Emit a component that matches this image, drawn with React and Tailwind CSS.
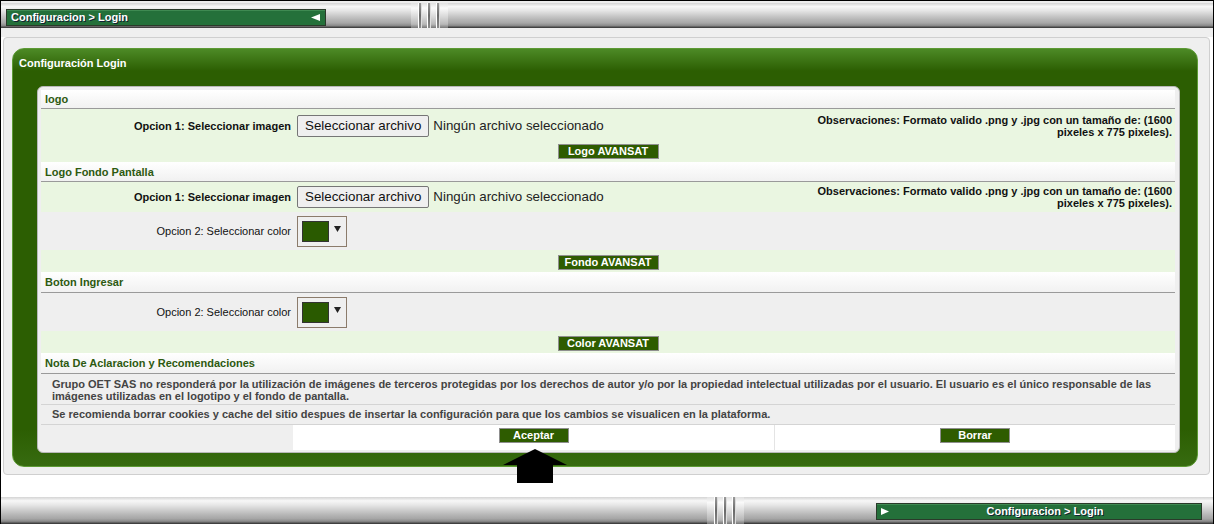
import React from "react";

const metal =
  "bg-[linear-gradient(to_bottom,#d4d4d4_0%,#f7f7f7_14%,#e6e6e6_30%,#cbcbcb_50%,#b6b6b6_66%,#a6a6a6_80%,#8a8a8a_90%,#4a4a4a_97%,#2e2e2e_100%)]";

function Grooves() {
  return (
    <div className="flex h-full w-[37px] bg-[linear-gradient(to_bottom,#e0e0e0_0%,#fafafa_20%,#d8d8d8_55%,#b8b8b8_85%,#777_100%)]">
      <div className="w-[7px]" />
      {[0, 1, 2].map((i) => (
        <div key={i} className="flex h-full w-[9px]">
          <div className="w-[1px] h-full bg-[#ffffff]" />
          <div className="w-[2px] h-full bg-[linear-gradient(to_bottom,#9a9a9a,#6a6a6a_50%,#8a8a8a)]" />
          <div className="w-[1px] h-full bg-[#dcdcdc]" />
          <div className="w-[5px] h-full" />
        </div>
      ))}
    </div>
  );
}

function Tab({ children }) {
  return (
    <div className="flex h-[17px] items-center border border-[#2a3a2a] bg-[#24703a] shadow-[inset_0_1px_0_#3f8a52] text-[11px] font-bold text-white [text-shadow:1px_1px_0_#123]">
      {children}
    </div>
  );
}

function GreenButton({ children, w }) {
  return (
    <div
      className={`flex h-[15px] items-center justify-center border border-[#8f8f8f] bg-[#2e5c00] text-[11px] font-bold leading-none text-white ${w}`}
    >
      {children}
    </div>
  );
}

function Header({ children, h }) {
  return (
    <div
      className={`flex items-center border-b border-[#9a9a9a] bg-[linear-gradient(to_bottom,#ffffff,#f1f1f1)] pl-[4px] pt-[1px] text-[11px] font-bold text-[#2d5a10] ${h}`}
    >
      {children}
    </div>
  );
}

function FileRow({ h }) {
  return (
    <div className={`grid grid-cols-[252px_482px_400px] bg-[#eaf6e1] ${h}`}>
      <div className="flex items-center justify-end pr-[2px] text-[11px] font-bold text-[#111]">
        Opcion 1: Seleccionar imagen
      </div>
      <div className="flex items-center pl-[4px]">
        <div className="flex h-[22px] items-center rounded-[2px] border border-[#767676] bg-[#efefef] px-[7px] text-[13.33px] text-[#111]">
          Seleccionar archivo
        </div>
        <span className="ml-[4px] text-[13.33px] text-[#222]">Ningún archivo seleccionado</span>
      </div>
      <div className="flex items-center justify-end pr-[3px] text-right text-[11px] font-bold leading-[12px] text-[#111]">
        <div>
          Observaciones: Formato valido .png y .jpg con un tamaño de: (1600
          <br />
          pixeles x 775 pixeles).
        </div>
      </div>
    </div>
  );
}

function ColorRow({ h }) {
  return (
    <div className={`grid grid-cols-[252px_882px] bg-[#efefef] ${h}`}>
      <div className="flex items-center justify-end pr-[2px] text-[11px] text-[#111]">
        Opcion 2: Seleccionar color
      </div>
      <div className="flex items-center pl-[4px]">
        <div className="flex h-[31px] w-[50px] items-center border border-[#8b7b6b] bg-[#efefef] pl-[4px]">
          <div className="h-[21px] w-[27px] border border-[#333] bg-[#2a5a00]" />
          <svg width="7" height="6" viewBox="0 0 7 6" className="ml-[5px] mb-[5px]">
            <polygon points="0,0 7,0 3.5,6" fill="#222" />
          </svg>
        </div>
      </div>
    </div>
  );
}

function ButtonRow({ h, label, w, pt }) {
  return (
    <div className={`flex justify-center bg-[#eaf6e1] ${h} ${pt}`}>
      <GreenButton w={w}>{label}</GreenButton>
    </div>
  );
}

export default function App() {
  return (
    <div className="relative flex h-[524px] w-[1214px] flex-col overflow-hidden border-l border-r border-t border-black bg-white font-['Liberation_Sans',Arial,sans-serif]">
      {/* top bar */}
      <div className="h-[29px] bg-[#ededed] pt-[2px]">
        <div className={`flex h-[25px] ${metal}`}>
          <div className="ml-[5px] mt-[6px] w-[320px]">
            <Tab>
              <span className="pl-[4px]">Configuracion &gt; Login</span>
              <svg width="9" height="7" viewBox="0 0 9 7" className="ml-auto mr-[5px]">
                <polygon points="0,3.5 9,0 9,7" fill="#fff" />
              </svg>
            </Tab>
          </div>
          <div className="ml-[85px]">
            <Grooves />
          </div>
        </div>
      </div>

      {/* middle */}
      <div className="flex flex-col">
        <div className="h-[7px] bg-[#efefef]" />
        <div className="ml-[2px] h-[438px] w-[1207px] rounded-[4px] border border-[#cfcfcf] bg-[#efefef] pb-[7px] pl-[8px] pr-[11px] pt-[10px]">
          <div className="h-[419px] w-[1186px] rounded-[12px] border border-[#5d9a35] bg-[linear-gradient(to_bottom,#4d8a26_0px,#2c5e02_22px,#2c5e02_380px,#376b10_100%)]">
            <div className="h-[37px] pl-[6px] pt-[6px] text-[11px] font-bold text-white">
              Configuración Login
            </div>
            <div className="ml-[24px] h-[367px] w-[1143px] rounded-[6px] border border-[#b8b8b8] bg-[#efefef] pb-[2px] pl-[3px] pr-[4px] pt-[3px]">
              <Header h="h-[19px]">logo</Header>
              <FileRow h="h-[34px]" />
              <ButtonRow h="h-[19px]" pt="pt-[1px]" label="Logo AVANSAT" w="w-[101px]" />
              <Header h="h-[20px]">Logo Fondo Pantalla</Header>
              <FileRow h="h-[30px]" />
              <ColorRow h="h-[38px]" />
              <ButtonRow h="h-[22px]" pt="pt-[5px]" label="Fondo AVANSAT" w="w-[101px]" />
              <Header h="h-[21px]">Boton Ingresar</Header>
              <ColorRow h="h-[38px]" />
              <ButtonRow h="h-[22px]" pt="pt-[5px]" label="Color AVANSAT" w="w-[101px]" />
              <Header h="h-[21px]">Nota De Aclaracion y Recomendaciones</Header>
              <div className="flex h-[31px] items-center border-b border-[#d4d4d4] bg-[#efefef] pl-[11px] pr-[1px] pt-[1px] text-[11px] font-bold leading-[12px] text-[#444]">
                <div>
                  Grupo OET SAS no responderá por la utilización de imágenes de terceros protegidas por los derechos de autor y/o por la propiedad intelectual utilizadas por el usuario. El usuario es el único responsable de las imágenes utilizadas en el logotipo y el fondo de pantalla.
                </div>
              </div>
              <div className="flex h-[20px] items-center border-b border-[#d4d4d4] bg-[#efefef] pl-[11px] text-[11px] font-bold text-[#444]">
                Se recomienda borrar cookies y cache del sitio despues de insertar la configuración para que los cambios se visualicen en la plataforma.
              </div>
              <div className="grid h-[25px] grid-cols-[252px_482px_400px]">
                <div />
                <div className="flex justify-center border-r border-[#e4e4e4] bg-white pt-[3px]">
                  <GreenButton w="w-[70px]">Aceptar</GreenButton>
                </div>
                <div className="flex justify-center bg-white pt-[3px]">
                  <GreenButton w="w-[70px]">Borrar</GreenButton>
                </div>
              </div>
            </div>
          </div>
        </div>
        <div className="h-[22px] bg-white" />
      </div>

      {/* bottom bar */}
      <div className={`flex h-[27px] ${metal}`}>
        <div className="ml-[706px]">
          <Grooves />
        </div>
        <div className="ml-[132px] mt-[6px] w-[326px]">
          <Tab>
            <svg width="8" height="7" viewBox="0 0 8 7" className="ml-[4px]">
              <polygon points="0,0 8,3.5 0,7" fill="#fff" />
            </svg>
            <span className="flex-1 text-center">Configuracion &gt; Login</span>
          </Tab>
        </div>
      </div>

      {/* arrow overlay */}
      <svg
        width="64"
        height="34"
        viewBox="0 0 64 34"
        className="absolute left-[502px] top-[448px]"
      >
        <polygon points="32,0 64,16 50,16 50,34 14,34 14,16 0,16" fill="#000" />
      </svg>
    </div>
  );
}
